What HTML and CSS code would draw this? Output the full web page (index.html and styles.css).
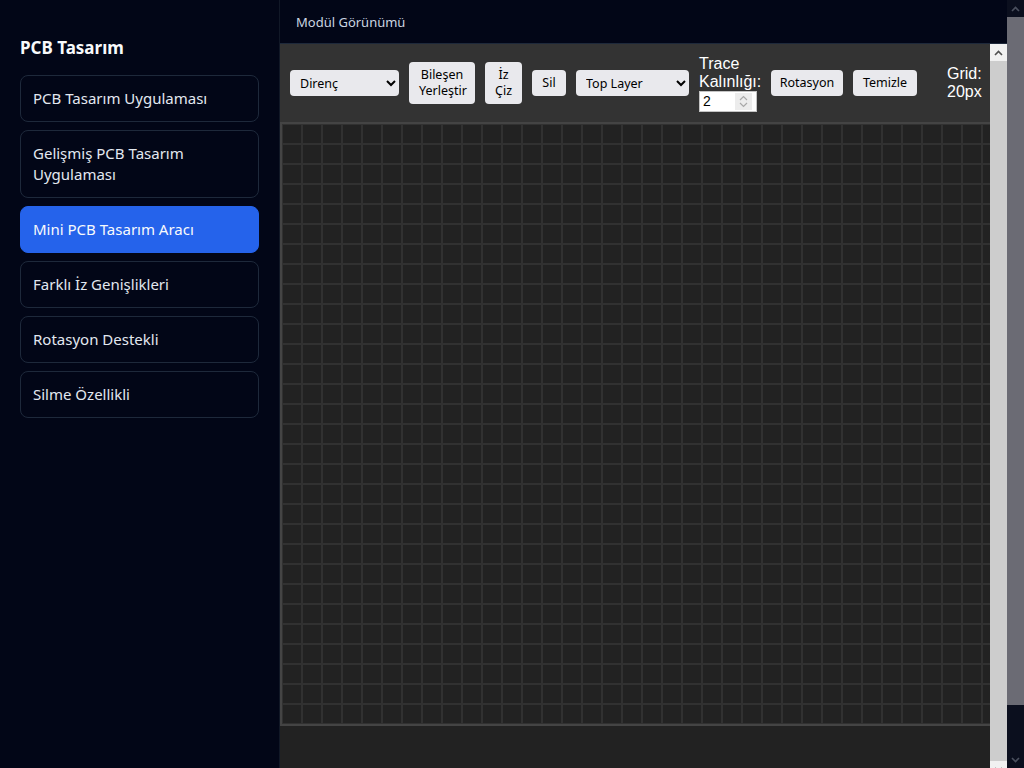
FILE: index.html
```html
<!DOCTYPE html>
<html lang="tr">
<head>
  <meta charset="UTF-8">
  <title>PCB Tasarım</title>
  <link rel="stylesheet" href="styles.css">
</head>
<body>

  <div class="app">
    <!-- Sol menü -->
    <aside class="sidebar">
      <h1 class="brand">PCB Tasarım</h1>
      <nav class="nav">
        <a class="nav-item" href="#">PCB Tasarım Uygulaması</a>
        <a class="nav-item" href="#">Gelişmiş PCB Tasarım Uygulaması</a>
        <a class="nav-item active" href="#">Mini PCB Tasarım Aracı</a>
        <a class="nav-item" href="#">Farklı İz Genişlikleri</a>
        <a class="nav-item" href="#">Rotasyon Destekli</a>
        <a class="nav-item" href="#">Silme Özellikli</a>
      </nav>
    </aside>

    <!-- Modül alanı -->
    <main class="main">
      <header class="main-header">Modül Görünümü</header>

      <div class="preview">
        <div class="preview-body">
          <div class="toolbar">
            <select class="tool-select select-part">
              <option>Direnç</option>
              <option>Kondansatör</option>
              <option>LED</option>
            </select>
            <button class="tool-btn btn-place">Bileşen Yerleştir</button>
            <button class="tool-btn btn-trace">İz Çiz</button>
            <button class="tool-btn btn-delete">Sil</button>
            <select class="tool-select select-layer">
              <option>Top Layer</option>
              <option>Bottom Layer</option>
            </select>
            <label class="trace-label">Trace Kalınlığı:
              <span class="num-field">
                <input class="trace-input" type="number" value="2" min="1" max="10">
                <span class="spin">
                  <svg width="9" height="6" viewBox="0 0 9 6"><polyline points="1,5 4.5,1.5 8,5" /></svg>
                  <svg width="9" height="6" viewBox="0 0 9 6"><polyline points="1,1 4.5,4.5 8,1" /></svg>
                </span>
              </span>
            </label>
            <button class="tool-btn btn-rotate">Rotasyon</button>
            <button class="tool-btn btn-clear">Temizle</button>
            <span class="grid-info">Grid: 20px</span>
          </div>

          <div class="board"></div>
        </div>

        <!-- iç kaydırma çubuğu -->
        <div class="scrollbar scrollbar-light">
          <span class="scroll-btn">
            <svg width="9" height="6" viewBox="0 0 9 6"><polyline points="1,5 4.5,1.5 8,5" /></svg>
          </span>
          <span class="scroll-thumb"></span>
          <span class="scroll-btn">
            <svg width="9" height="6" viewBox="0 0 9 6"><polyline points="1,1 4.5,4.5 8,1" /></svg>
          </span>
        </div>
      </div>
    </main>

    <!-- sayfa kaydırma çubuğu -->
    <div class="scrollbar scrollbar-dark">
      <span class="scroll-btn">
        <svg width="9" height="6" viewBox="0 0 9 6"><polyline points="1,5 4.5,1.5 8,5" /></svg>
      </span>
      <span class="scroll-thumb thumb-page"></span>
      <span class="scroll-track"></span>
      <span class="scroll-btn">
        <svg width="9" height="6" viewBox="0 0 9 6"><polyline points="1,1 4.5,4.5 8,1" /></svg>
      </span>
    </div>
  </div>

</body>
</html>
```

FILE: styles.css
```css
/* Genel */
body {
  margin: 0;
  background-color: #020617;
  color: #e2e8f0;
  font-family: 'Noto Sans', 'Open Sans', sans-serif;
}

.app {
  display: flex;
  height: 100vh;
  overflow: hidden;
}

/* Sol menü */
.sidebar {
  width: 280px;
  flex: none;
  box-sizing: border-box;
  padding: 20px;
  border-right: 1px solid #111827;
  background-color: #020617;
}

.brand {
  margin: 16px 0 15px;
  font-size: 17px;
  line-height: 24px;
  font-weight: 700;
  color: #f8fafc;
}

.nav {
  display: flex;
  flex-direction: column;
  gap: 8px;
}

.nav-item {
  display: block;
  padding: 12px;
  border: 1px solid #1e293b;
  border-radius: 8px;
  font-size: 15px;
  line-height: 21px;
  color: #e2e8f0;
  text-decoration: none;
}

.nav-item.active {
  background-color: #2563eb;
  border-color: #2563eb;
  color: #f8fafc;
}

/* Modül alanı */
.main {
  flex: 1;
  min-width: 0;
  overflow: hidden;
}

.main-header {
  height: 43px;
  display: flex;
  align-items: center;
  padding: 0 16px;
  border-bottom: 1px solid #1e293b;
  font-size: 13px;
  color: #cbd5e1;
}

.preview {
  display: flex;
  height: 734px;
  background-color: #222;
}

.preview-body {
  flex: 1;
  min-width: 0;
  overflow: hidden;
}

/* Araç çubuğu */
.toolbar {
  height: 78px;
  box-sizing: border-box;
  display: flex;
  align-items: center;
  gap: 10px;
  padding: 10px;
  background-color: #333;
  font-family: 'Liberation Sans', Arial, sans-serif;
  color: #fff;
}

.tool-select,
.tool-btn {
  flex: none;
  box-sizing: border-box;
  border: none;
  border-radius: 4px;
  background-color: #e9e9ed;
  color: #000;
  font-family: 'Noto Sans', 'Open Sans', sans-serif;
  font-size: 12.5px;
  line-height: 16px;
}

.tool-btn {
  padding: 5px 10px;
  text-align: center;
}

.btn-place { width: 66px; }
.btn-trace { width: 37px; }
.btn-delete { width: 34px; }
.btn-rotate { width: 72px; padding: 5px 0; }
.btn-clear { width: 64px; padding: 5px 0; }

.tool-select {
  height: 26px;
  padding: 0 4px 0 6px;
}

.select-part { width: 109px; }
.select-layer { width: 113px; }

.trace-label {
  width: 62px;
  flex: none;
  font-size: 16px;
  line-height: 18px;
}

.num-field {
  display: flex;
  align-items: center;
  width: 58px;
  height: 21px;
  box-sizing: border-box;
  border: 1px solid #c4c4c4;
  background: #fff;
}

.trace-input {
  flex: 1;
  min-width: 0;
  height: 100%;
  box-sizing: border-box;
  margin: 0;
  padding: 0 3px;
  border: none;
  outline: none;
  background: transparent;
  font-family: 'Liberation Sans', Arial, sans-serif;
  font-size: 14px;
  color: #000;
  appearance: textfield;
}

.trace-input::-webkit-inner-spin-button,
.trace-input::-webkit-outer-spin-button {
  -webkit-appearance: none;
  margin: 0;
}

.spin {
  width: 17px;
  height: 17px;
  margin-right: 4px;
  display: flex;
  flex-direction: column;
  align-items: center;
  justify-content: center;
  gap: 1px;
  background: #ececec;
}

.spin svg polyline {
  fill: none;
  stroke: #a8a8a8;
  stroke-width: 1.2;
}

.grid-info {
  width: 36px;
  flex: none;
  margin-left: 20px;
  font-size: 16px;
  line-height: 18px;
}

/* Çizim alanı */
.board {
  width: 800px;
  height: 600px;
  border: 2px solid #444;
  background-color: #222;
  background-image:
    linear-gradient(to right, #313131 0 1px, transparent 1px 19px, #313131 19px 20px),
    linear-gradient(to bottom, #313131 0 1px, transparent 1px 19px, #313131 19px 20px);
  background-size: 20px 20px;
}

/* Kaydırma çubukları */
.scrollbar {
  width: 17px;
  flex: none;
  display: flex;
  flex-direction: column;
}

.scroll-btn {
  height: 17px;
  flex: none;
  display: flex;
  align-items: center;
  justify-content: center;
}

.scroll-track { flex: 1; }

.scroll-btn polyline {
  fill: none;
  stroke-width: 1.6;
}

.scrollbar-light { background-color: #f1f1f1; }
.scrollbar-light .scroll-btn polyline { stroke: #505050; }
.scrollbar-light .scroll-thumb {
  flex: 1;
  background-color: #cdcdcd;
}

.scrollbar-dark { background-color: #0b0f1e; }
.scrollbar-dark .scroll-btn polyline { stroke: #4b505e; }
.scrollbar-dark .scroll-thumb { background-color: #6b6b74; }
.thumb-page { height: 688px; flex: none; }
```
